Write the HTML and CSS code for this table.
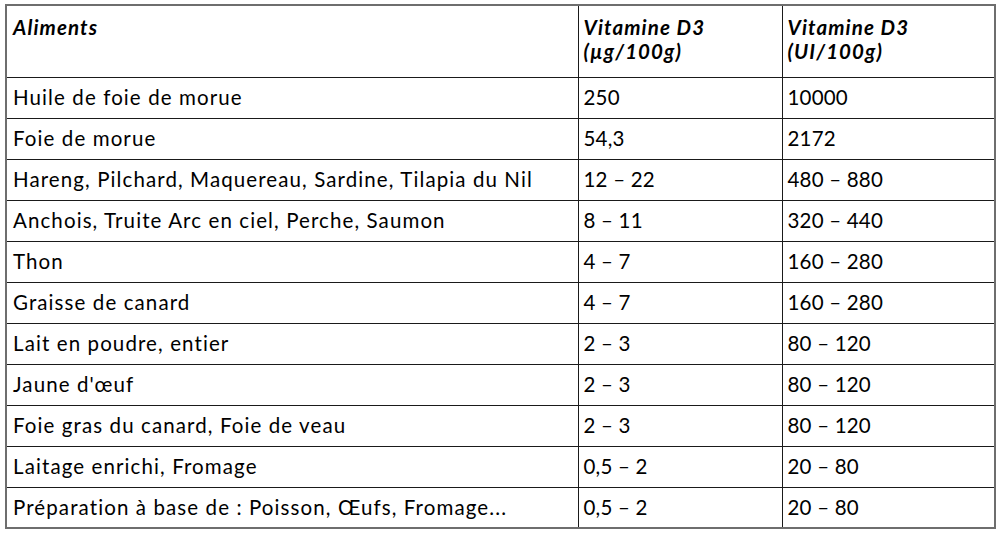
FILE: index.html
```html
<!DOCTYPE html>
<html lang="fr">
<head>
<meta charset="utf-8">
<title>Vitamine D3</title>
<link rel="stylesheet" href="styles.css">
</head>
<body>
<div class="wrap">
<table class="vit">
  <colgroup>
    <col class="c1"><col class="c2"><col class="c3">
  </colgroup>
  <thead>
    <tr>
      <th>Aliments</th>
      <th>Vitamine D3<br>(µg/100g)</th>
      <th>Vitamine D3<br>(UI/100g)</th>
    </tr>
  </thead>
  <tbody>
    <tr><td>Huile de foie de morue</td><td>250</td><td>10000</td></tr>
    <tr><td>Foie de morue</td><td>54,3</td><td>2172</td></tr>
    <tr><td>Hareng, Pilchard, Maquereau, Sardine, Tilapia du Nil</td><td>12 – 22</td><td>480 – 880</td></tr>
    <tr><td>Anchois, Truite Arc en ciel, Perche, Saumon</td><td>8 – 11</td><td>320 – 440</td></tr>
    <tr><td>Thon</td><td>4 – 7</td><td>160 – 280</td></tr>
    <tr><td>Graisse de canard</td><td>4 – 7</td><td>160 – 280</td></tr>
    <tr><td>Lait en poudre, entier</td><td>2 – 3</td><td>80 – 120</td></tr>
    <tr><td>Jaune d'œuf</td><td>2 – 3</td><td>80 – 120</td></tr>
    <tr><td>Foie gras du canard, Foie de veau</td><td>2 – 3</td><td>80 – 120</td></tr>
    <tr><td>Laitage enrichi, Fromage</td><td>0,5 – 2</td><td>20 – 80</td></tr>
    <tr><td>Préparation à base de : Poisson, Œufs, Fromage...</td><td>0,5 – 2</td><td>20 – 80</td></tr>
  </tbody>
</table>
</div>
</body>
</html>
```
FILE: styles.css
```css
html, body {
  margin: 0;
  padding: 0;
  background: #ffffff;
}
.wrap {
  padding: 4px 0 0 5px;
}
.vit {
  border-collapse: collapse;
  table-layout: fixed;
  width: 989px;
  font-family: Lato, "Liberation Sans", sans-serif;
  font-size: 20.5px;
  letter-spacing: 1.1px;
  color: #000;
  border: 2px solid #6e6e6e;
}
.c1 { width: 572px; }
.c2 { width: 204px; }
.c3 { width: 213px; }
.vit th, .vit td {
  border: 1px solid #1a1a1a;
  text-align: left;
  vertical-align: top;
  line-height: 24px;
  white-space: nowrap;
}
.vit th {
  font-weight: bold;
  font-style: italic;
  height: 72px;
  box-sizing: border-box;
  padding: 9px 5px 0 6px;
}
.vit td {
  height: 41px;
  box-sizing: border-box;
  padding: 7px 5px 0 6px;
}
.vit td + td, .vit th + th {
  padding-left: 5px;
}
.vit td + td {
  letter-spacing: 0.2px;
}
```
